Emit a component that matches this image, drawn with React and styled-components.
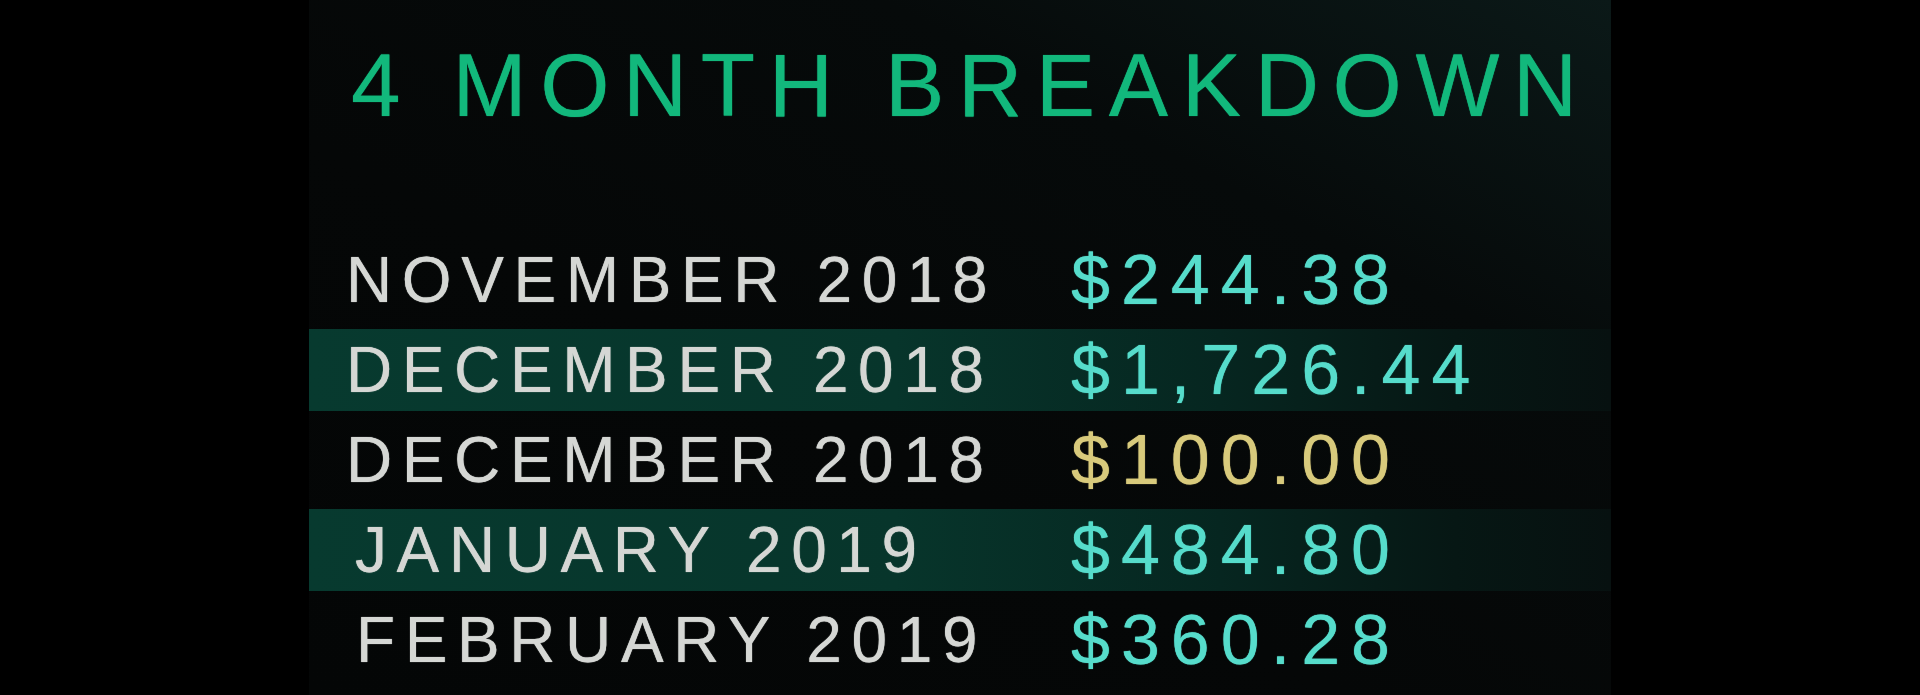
import styled, { createGlobalStyle } from 'styled-components';

const GlobalStyle = createGlobalStyle`
  html, body {
    margin: 0;
    padding: 0;
    background: #000;
  }
  body {
    font-family: 'Liberation Sans', Arial, sans-serif;
  }
`;

const tones = {
  teal: '#56dccb',
  gold: '#d8ca7c',
};

const months = [
  { month: 'NOVEMBER 2018', amount: '$244.38', tone: 'teal' },
  { month: 'DECEMBER 2018', amount: '$1,726.44', tone: 'teal', highlighted: true },
  { month: 'DECEMBER 2018', amount: '$100.00', tone: 'gold' },
  { month: 'JANUARY 2019', amount: '$484.80', tone: 'teal', highlighted: true, indent: 9 },
  { month: 'FEBRUARY 2019', amount: '$360.28', tone: 'teal', indent: 10 },
];

const Page = styled.main`
  display: flex;
  justify-content: center;
  height: 695px;
  background: #000;
`;

const Panel = styled.section`
  width: 1302px;
  height: 100%;
  box-sizing: border-box;
  padding-top: 41px;
  display: flex;
  flex-direction: column;
  background: linear-gradient(to bottom left, #0b1918 0%, #060a0a 28%, #050707 60%, #040606 100%);
`;

const Title = styled.h1`
  margin: 0;
  padding-left: 42px;
  font-size: 89px;
  line-height: 89px;
  font-weight: 400;
  letter-spacing: 13.6px;
  color: #12b87c;
  text-shadow: 0 0 1px #12b87c;
  white-space: nowrap;
`;

const Rows = styled.div`
  margin-top: 109px;
  display: flex;
  flex-direction: column;
  gap: 8px;
`;

const Row = styled.div`
  display: grid;
  grid-template-columns: 725px 1fr;
  align-items: center;
  height: 82px;
  padding-left: 37px;
  background: ${props =>
    props.highlighted
      ? 'linear-gradient(to right, #073a2f 0%, #07352b 45%, #062620 70%, #061714 88%, #071110 100%)'
      : 'transparent'};
`;

const Month = styled.span`
  padding-left: ${props => props.indent || 0}px;
  font-size: 64px;
  line-height: 82px;
  letter-spacing: 9.6px;
  color: #d5d7d4;
  text-shadow: 0 0 1px #d5d7d4;
  white-space: nowrap;
`;

const Amount = styled.span`
  font-size: 70px;
  line-height: 82px;
  letter-spacing: 11px;
  color: ${props => tones[props.tone]};
  text-shadow: 0 0 1px ${props => tones[props.tone]};
  white-space: nowrap;
`;

export default function App() {
  return (
    <>
      <GlobalStyle />
      <Page>
        <Panel>
          <Title>4 MONTH BREAKDOWN</Title>
          <Rows>
            {months.map(({ month, amount, tone, highlighted, indent }, i) => (
              <Row key={i} highlighted={highlighted ? 1 : 0}>
                <Month indent={indent}>{month}</Month>
                <Amount tone={tone}>{amount}</Amount>
              </Row>
            ))}
          </Rows>
        </Panel>
      </Page>
    </>
  );
}
